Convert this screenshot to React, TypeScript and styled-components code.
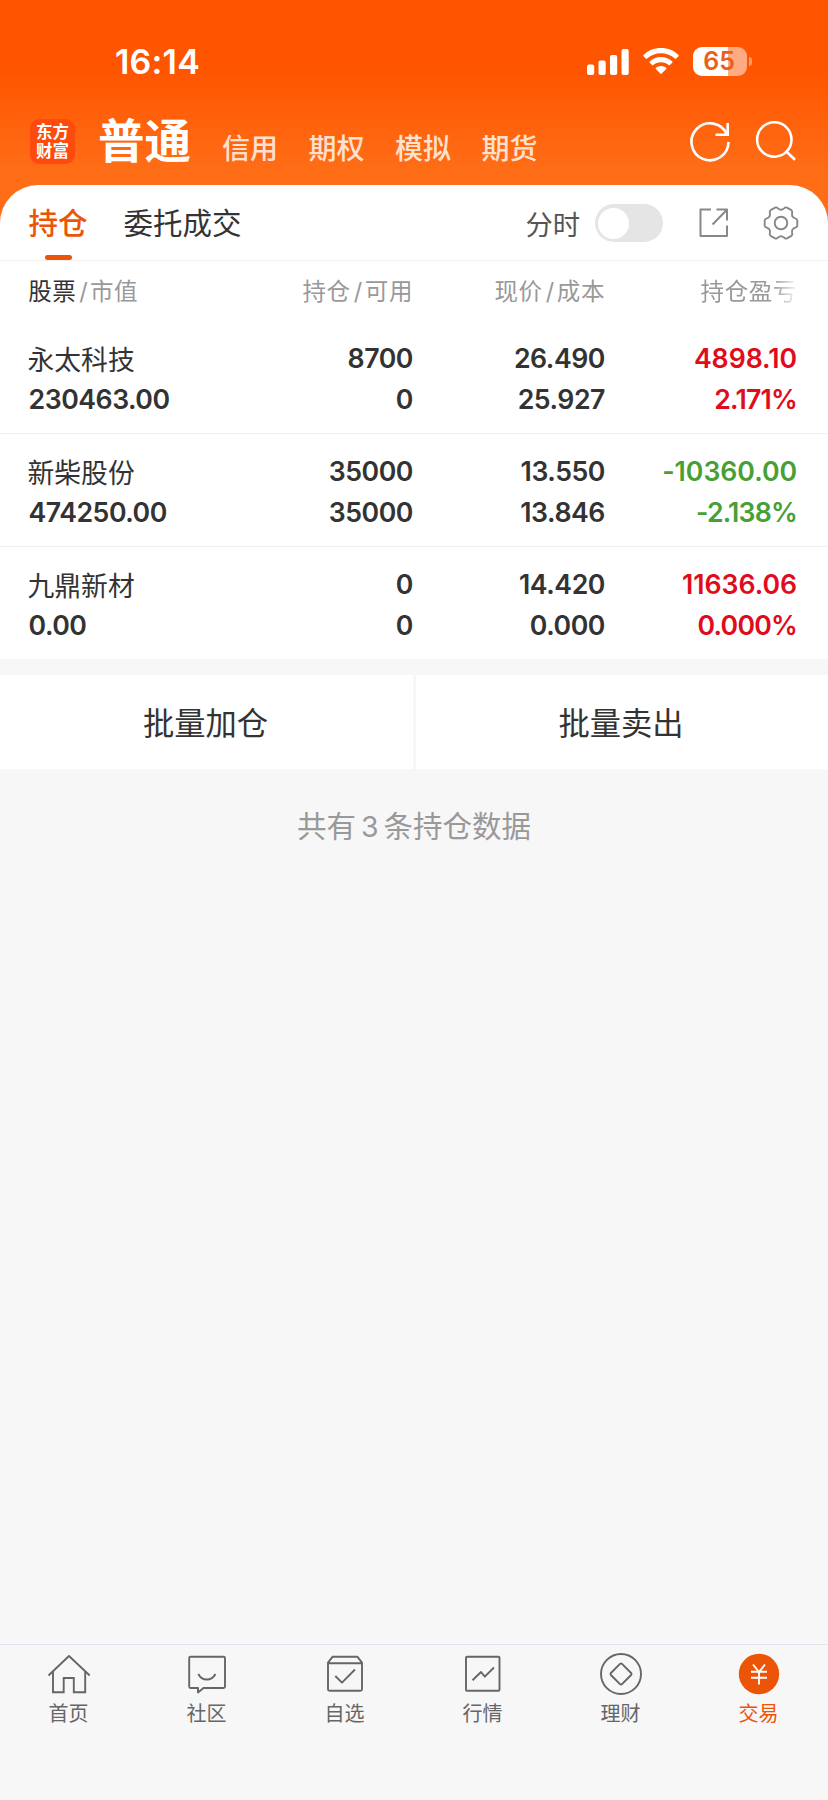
import React from "react";
import styled, { createGlobalStyle } from "styled-components";

const GlobalStyle = createGlobalStyle`
  * { box-sizing: border-box; }
  body {
    margin: 0;
    background: #f7f7f7;
    font-family: Inter, "Noto Sans CJK SC", sans-serif;
    color: #333;
  }
  svg { display: block; flex: none; }
`;

const Screen = styled.div`
  display: flex;
  flex-direction: column;
  width: 828px;
  height: 1800px;
  overflow: hidden;
  background: #f7f7f7;
`;

const Hero = styled.header`
  height: 230px;
  flex: none;
  margin-bottom: -45.5px;
  background: linear-gradient(#ff5500 0, #ff5500 70px, #ff6d17 170px, #ff6d17 100%);
`;

const StatusBar = styled.div`
  display: flex;
  align-items: center;
  height: 82px;
  padding: 41px 81px 0 115px;
`;

const Clock = styled.div`
  flex: 1;
  font-size: 34px;
  line-height: 41px;
  font-weight: 600;
  letter-spacing: 0.2px;
  color: #fff;
`;

const WifiBox = styled.div`
  margin-left: 14px;
`;

const Battery = styled.div`
  position: relative;
  width: 54px;
  height: 29px;
  margin-left: 14px;
  border-radius: 9px;
  background: linear-gradient(90deg, #fff 0 35px, #ffab82 35px 100%);
  color: #e8611c;
  font-size: 25px;
  font-weight: 600;
  line-height: 29px;
  text-align: center;
  text-indent: -2px;

  &::after {
    content: "";
    position: absolute;
    left: 55.5px;
    top: 10px;
    width: 3.5px;
    height: 9px;
    border-radius: 0 4px 4px 0;
    background: #ff9a68;
  }
`;

const TopNav = styled.nav`
  display: flex;
  height: 102px;
  padding: 0 31px 0 30px;
`;

const Logo = styled.div`
  width: 45px;
  height: 45px;
  margin-top: 37px;
  padding-top: 3.5px;
  border-radius: 9px;
  background: #ff4a0e;
  color: #fff;
  font-size: 16.5px;
  font-weight: 700;
  line-height: 19px;
  text-align: center;
`;

const ActiveAccount = styled.div`
  margin: 28px 0 0 23px;
  width: 96px;
  font-size: 46.5px;
  font-weight: 700;
  line-height: 62px;
  color: #fff;
  white-space: nowrap;
`;

const AccountTabs = styled.div`
  display: flex;
  flex: 1;
  gap: 30.5px;
  margin: 47px 0 0 28px;
  font-size: 28px;
  font-weight: 500;
  line-height: 40px;
  color: #ffe1cf;
`;

const TopActions = styled.div`
  display: flex;
  gap: 25.5px;
  margin-top: 38px;
`;

const Card = styled.section`
  flex: none;
  height: 474px;
  border-radius: 38px 38px 0 0;
  background: #fff;
`;

const CardTabs = styled.div`
  display: flex;
  align-items: center;
  height: 76.5px;
  padding: 2px 29px 0 28.5px;
  border-bottom: 1px solid #f2f2f2;
`;

const CardTab = styled.div<{ $active?: boolean }>`
  position: relative;
  margin-right: 36px;
  font-size: 29.5px;
  font-weight: ${(p) => (p.$active ? 500 : 400)};
  line-height: 74px;
  color: ${(p) => (p.$active ? "#ec5508" : "#333")};

  &::after {
    content: "";
    display: ${(p) => (p.$active ? "block" : "none")};
    position: absolute;
    left: 16.5px;
    bottom: 0;
    width: 27px;
    height: 5px;
    border-radius: 2.5px;
    background: #ec5508;
  }
`;

const SwitchLabel = styled.div`
  margin-left: auto;
  font-size: 27.3px;
  color: #555;
`;

const Switch = styled.div`
  display: flex;
  align-items: center;
  width: 68px;
  height: 38px;
  margin: 0 36px 0 15px;
  padding: 0 3px;
  border-radius: 19px;
  background: #e5e5e5;

  &::before {
    content: "";
    width: 31px;
    height: 31px;
    border-radius: 50%;
    background: #fff;
  }
`;

const CardIcons = styled.div`
  display: flex;
  align-items: center;
  gap: 34px;
`;

const TableHead = styled.div`
  display: grid;
  grid-template-columns: repeat(4, 192px);
  padding: 0 31px 0 29px;
  height: 60px;
  line-height: 61px;
  font-size: 23.5px;
  letter-spacing: 0.6px;
  color: #999;
`;

const HeadCell = styled.div<{ $right?: boolean; $fade?: boolean }>`
  text-align: ${(p) => (p.$right ? "right" : "left")};
  letter-spacing: ${(p) => (p.$right ? "0.6px" : "0.4px")};
  margin-left: ${(p) => (p.$right ? 0 : "-0.7px")};
  ${(p) =>
    p.$fade &&
    "mask-image: linear-gradient(90deg, #000 0 168px, transparent 194px);"}

  b { font-weight: 400; color: #333; }
  i { font-style: normal; margin: 0 2px 0 3px; }
`;

const Row = styled.div<{ $last?: boolean }>`
  display: grid;
  grid-template-columns: repeat(4, 192px);
  height: 113px;
  padding: 17px 31px 0 29px;
  border-bottom: 1px solid ${(p) => (p.$last ? "transparent" : "#f0f0f0")};
`;

const Cell = styled.div<{ $right?: boolean; $color?: string }>`
  text-align: ${(p) => (p.$right ? "right" : "left")};
  color: ${(p) => p.$color ?? "#333"};
  font-size: 26.7px;
  font-weight: 600;
  line-height: 40.7px;
  letter-spacing: -0.45px;
  white-space: nowrap;
`;

const StockName = styled.div`
  margin-left: -1.5px;
  padding-top: 2.3px;
  height: 40.7px;
  font-size: 26.8px;
  font-weight: 400;
  letter-spacing: 0;
`;

const StockValue = styled.div`
  margin-left: -0.5px;
  letter-spacing: -0.48px;
`;

const Profit = styled.div`
  letter-spacing: -0.05px;
`;

const Rate = styled.div`
  letter-spacing: -0.8px;
`;

const BatchActions = styled.div`
  display: grid;
  grid-template-columns: 413px 412px;
  gap: 3px;
  flex: none;
  height: 94px;
  margin-top: 16px;
`;

const BatchButton = styled.button`
  border: 0;
  padding: 4px 2px 0 0;
  background: #fff;
  font: inherit;
  font-size: 31.3px;
  line-height: 90px;
  color: #333;
`;

const Summary = styled.div`
  flex: 1;
  padding-top: 37px;
  font-size: 29.5px;
  line-height: 40px;
  text-align: center;
  color: #999;

  span { margin: 0 5px 0 5px; font-size: 28.5px; }
`;

const TabBar = styled.nav`
  display: grid;
  grid-template-columns: repeat(6, 138px);
  flex: none;
  height: 156px;
  border-top: 1px solid #e4e4ee;
  background: #f7f7f8;
`;

const TabItem = styled.div<{ $active?: boolean }>`
  display: flex;
  flex-direction: column;
  align-items: center;
  padding-top: 6px;
  font-size: 20px;
  line-height: 30px;
  color: ${(p) => (p.$active ? "#ec5508" : "#666")};

  svg { margin-bottom: 2px; }
  span { margin-right: 1px; }
`;

const SignalIcon = () => (
  <svg width="42" height="26" viewBox="0 0 42 26" fill="#fff">
    <rect x="0" y="15.5" width="7.2" height="10.5" rx="2" />
    <rect x="11.5" y="11.5" width="7.2" height="14.5" rx="2" />
    <rect x="23" y="6" width="7.2" height="20" rx="2" />
    <rect x="34.5" y="0" width="7.2" height="26" rx="2" />
  </svg>
);

const WifiIcon = () => (
  <svg width="36" height="27" viewBox="0 0 36 27" fill="#fff">
    <path d="M18 0C24.900 0 31.100 2.600 35.500 7.100Q36 7.700 35.500 8.300L33.200 10.600Q32.500 11.200 31.900 10.600C28.200 7.200 23.300 5.200 18 5.200S7.800 7.200 4.100 10.600Q3.500 11.200 2.800 10.600L.5 8.300Q0 7.700 .5 7.100C4.900 2.600 11.100 0 18 0Z" />
    <path d="M18 9C22.400 9 26.400 10.700 29.300 13.500Q29.900 14.100 29.300 14.700L26.900 17Q26.300 17.600 25.600 17C23.600 15.200 20.900 14.200 18 14.200S12.400 15.200 10.400 17Q9.700 17.600 9.100 17L6.700 14.700Q6.100 14.100 6.700 13.500C9.600 10.700 13.600 9 18 9Z" />
    <path d="M18 18C20 18 21.800 18.700 23.200 19.900Q23.700 20.500 23.200 21.100L18.700 25.600Q18 26.200 17.300 25.600L12.800 21.100Q12.300 20.500 12.800 19.900C14.200 18.700 16 18 18 18Z" />
  </svg>
);

const RefreshIcon = () => (
  <svg width="40" height="42" viewBox="0 0 40 42" fill="none" stroke="#fff" strokeWidth="2.6">
    <path d="M38.500 22A18.500 18.500 0 1 1 37 14.500" />
    <path d="M37.700 3V14.700H25.500" />
  </svg>
);

const SearchIcon = () => (
  <svg width="42" height="42" viewBox="0 0 42 42" fill="none" stroke="#fff" strokeWidth="2.6">
    <circle cx="19.300" cy="19.500" r="17.200" />
    <path d="M31.300 31.500L40 39.700" />
  </svg>
);

const ShareIcon = () => (
  <svg width="30" height="30" viewBox="0 0 30 30" fill="none" stroke="#888" strokeWidth="2" strokeLinejoin="round">
    <path d="M12 1.500H1.500V28H28V17.500" />
    <path d="M17.500 1.500H28V12.500" />
    <path d="M13.500 16.500L27.700 2" />
  </svg>
);

const polar = (degrees: number, radius: number) => {
  const a = (degrees * Math.PI) / 180;
  return `${(18 + radius * Math.cos(a)).toFixed(2)} ${(18 + radius * Math.sin(a)).toFixed(2)}`;
};

// Six blunt teeth joined by shallow concave curves.
const gearPath =
  `M${polar(-9, 16.5)}` +
  [0, 60, 120, 180, 240, 300]
    .map(
      (t) =>
        `L${polar(t + 9, 16.5)}Q${polar(t + 15, 16.6)} ${polar(t + 18, 15)}` +
        `Q${polar(t + 30, 11.8)} ${polar(t + 42, 15)}Q${polar(t + 45, 16.6)} ${polar(t + 51, 16.5)}`
    )
    .join("") +
  "Z";

const GearIcon = () => (
  <svg width="36" height="36" viewBox="0 0 36 36" fill="none" stroke="#888" strokeWidth="1.9" strokeLinejoin="round">
    <path d={gearPath} />
    <circle cx="18" cy="18" r="6.300" />
  </svg>
);

const TabSvg = ({ children }: { children: React.ReactNode }) => (
  <svg width="48" height="46" viewBox="0 0 48 46" fill="none" stroke="#666" strokeWidth="1.900" strokeLinejoin="round">
    {children}
  </svg>
);

const tabs = [
  {
    label: "首页",
    icon: (
      <>
        <path d="M3.500 24.500L24 5L44.700 24.500" />
        <path d="M8 20.500V41.300H18.700V27H28.800V41.300H40.200V20.500" strokeLinejoin="miter" />
      </>
    ),
  },
  {
    label: "社区",
    icon: (
      <>
        <path d="M7.500 5.800H40.500Q42 5.800 42 7.300V35.500Q42 37 40.500 37H20.500L15 41.500V37H7.500Q6.200 37 6.200 35.500V7.300Q6.200 5.800 7.500 5.800Z" />
        <path d="M15.300 23Q18 28.500 23.800 28.500T32.500 23" />
      </>
    ),
  },
  {
    label: "自选",
    icon: (
      <>
        <path d="M7 11.700L11.500 5.800H36.500L41 11.700V38.300Q41 39.800 39.500 39.800H8.500Q7 39.800 7 38.300ZM7 12.200H41" />
        <path d="M14.300 25L21 31.700L34 18.500" />
      </>
    ),
  },
  {
    label: "行情",
    icon: (
      <>
        <rect x="7" y="5.800" width="33.500" height="34" rx="1" />
        <path d="M13.500 29.300L22 21L25.800 25.700L35 16.500" />
      </>
    ),
  },
  {
    label: "理财",
    icon: (
      <>
        <circle cx="24" cy="23" r="20" />
        <path d="M23 12.900L13.900 22Q13 23 13.900 24L23 33.100Q24 34 25 33.100L34.100 24Q35 23 34.100 22L25 12.900Q24 12 23 12.900Z" />
      </>
    ),
  },
  {
    label: "交易",
    active: true,
    icon: (
      <>
        <circle cx="24" cy="23" r="20.200" fill="#ec5508" stroke="none" />
        <path d="M18 13.500L24 21L30 13.500M24 21V33.500M16 20.800H32M16 26.800H32" stroke="#fff" strokeWidth="1.900" />
      </>
    ),
  },
];

const RED = "#e00c1c";
const GREEN = "#489f35";

const holdings = [
  { name: "永太科技", value: "230463.00", held: "8700", usable: "0", price: "26.490", cost: "25.927", profit: "4898.10", rate: "2.171%", color: RED },
  { name: "新柴股份", value: "474250.00", held: "35000", usable: "35000", price: "13.550", cost: "13.846", profit: "-10360.00", rate: "-2.138%", color: GREEN },
  { name: "九鼎新材", value: "0.00", held: "0", usable: "0", price: "14.420", cost: "0.000", profit: "11636.06", rate: "0.000%", color: RED },
];

export default function App() {
  return (
    <Screen>
      <GlobalStyle />
      <Hero>
        <StatusBar>
          <Clock>16:14</Clock>
          <SignalIcon />
          <WifiBox><WifiIcon /></WifiBox>
          <Battery>65</Battery>
        </StatusBar>
        <TopNav>
          <Logo>东方<br />财富</Logo>
          <ActiveAccount>普通</ActiveAccount>
          <AccountTabs>
            {["信用", "期权", "模拟", "期货"].map((t) => <span key={t}>{t}</span>)}
          </AccountTabs>
          <TopActions><RefreshIcon /><SearchIcon /></TopActions>
        </TopNav>
      </Hero>
      <Card>
        <CardTabs>
          <CardTab $active>持仓</CardTab>
          <CardTab>委托成交</CardTab>
          <SwitchLabel>分时</SwitchLabel>
          <Switch />
          <CardIcons><ShareIcon /><GearIcon /></CardIcons>
        </CardTabs>
        <TableHead>
          <HeadCell><b>股票</b><i>/</i>市值</HeadCell>
          <HeadCell $right>持仓<i>/</i>可用</HeadCell>
          <HeadCell $right>现价<i>/</i>成本</HeadCell>
          <HeadCell $right $fade>持仓盈亏</HeadCell>
        </TableHead>
        {holdings.map((h, i) => (
          <Row key={h.name} $last={i === holdings.length - 1}>
            <Cell>
              <StockName>{h.name}</StockName>
              <StockValue>{h.value}</StockValue>
            </Cell>
            <Cell $right>{h.held}<br />{h.usable}</Cell>
            <Cell $right>{h.price}<br />{h.cost}</Cell>
            <Cell $right $color={h.color}>
              <Profit>{h.profit}</Profit>
              <Rate>{h.rate}</Rate>
            </Cell>
          </Row>
        ))}
      </Card>
      <BatchActions>
        <BatchButton>批量加仓</BatchButton>
        <BatchButton>批量卖出</BatchButton>
      </BatchActions>
      <Summary>共有<span>3</span>条持仓数据</Summary>
      <TabBar>
        {tabs.map((t) => (
          <TabItem key={t.label} $active={t.active}>
            <TabSvg>{t.icon}</TabSvg>
            <span>{t.label}</span>
          </TabItem>
        ))}
      </TabBar>
    </Screen>
  );
}
